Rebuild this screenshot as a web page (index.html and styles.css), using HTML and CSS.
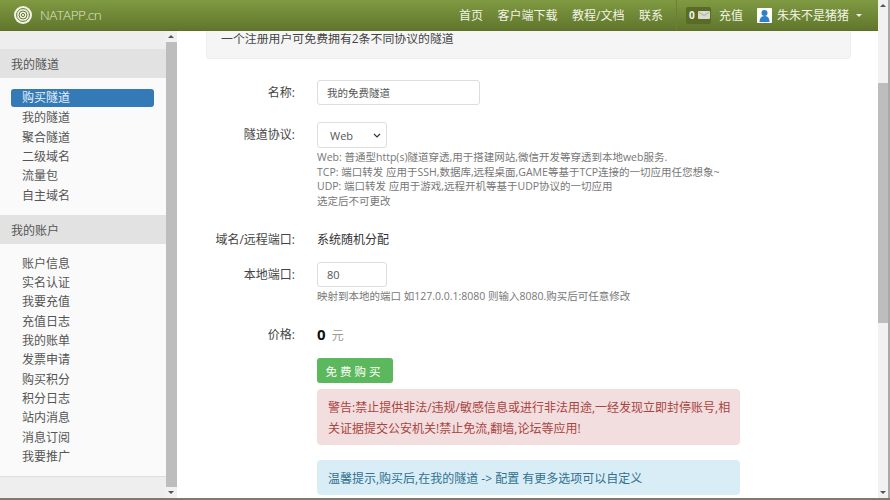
FILE: index.html
```html
<!DOCTYPE html>
<html lang="zh-CN">
<head>
<meta charset="utf-8">
<title>NATAPP</title>
<link rel="stylesheet" href="styles.css">
</head>
<body>
<div class="app">
  <div class="main">
    <header class="nav">
      <a class="brand">
        <svg class="logo" viewBox="0 0 18 18" width="18" height="18"><circle cx="9" cy="9" r="9" fill="#f1f3e6"/><circle cx="9" cy="9" r="6.4" fill="none" stroke="#66792f" stroke-width="1"/><circle cx="9" cy="9" r="4" fill="none" stroke="#66792f" stroke-width="1"/><circle cx="9" cy="9" r="1.6" fill="none" stroke="#66792f" stroke-width="1"/></svg>
        <span class="brand-name">NATAPP.cn</span>
      </a>
      <nav class="links">
        <a>首页</a><a>客户端下载</a><a>教程/文档</a><a>联系</a>
      </nav>
      <div class="account">
        <span class="badge"><b>0</b><svg viewBox="0 0 12 8" width="12" height="8"><rect width="12" height="8" rx="1" fill="#d9dcd0"/><path d="M1 1.5l5 3 5-3" fill="none" stroke="#9a9f8c" stroke-width=".8"/></svg></span>
        <a class="recharge">充值</a>
        <svg class="avatar" viewBox="0 0 15 15" width="15" height="15"><rect width="15" height="15" rx="1" fill="#fff"/><circle cx="7.5" cy="5" r="3" fill="#2f80c4"/><path d="M2.5 14c0-4 1.8-6 5-6s5 2 5 6z" fill="#2f80c4"/></svg>
        <a class="user">朱朱不是猪猪</a>
        <span class="caret"></span>
      </div>
    </header>
    <div class="body">
      <aside class="sidebar">
        <div class="side-top"></div>
        <h4 class="side-head">我的隧道</h4>
        <ul class="side-list">
          <li class="active">购买隧道</li>
          <li>我的隧道</li>
          <li>聚合隧道</li>
          <li>二级域名</li>
          <li>流量包</li>
          <li>自主域名</li>
        </ul>
        <h4 class="side-head">我的账户</h4>
        <ul class="side-list second">
          <li>账户信息</li>
          <li>实名认证</li>
          <li>我要充值</li>
          <li>充值日志</li>
          <li>我的账单</li>
          <li>发票申请</li>
          <li>购买积分</li>
          <li>积分日志</li>
          <li>站内消息</li>
          <li>消息订阅</li>
          <li>我要推广</li>
        </ul>
        <div class="side-bottom"></div>
      </aside>
      <div class="scrollbar side-scroll">
        <span class="arrow up"></span>
        <span class="thumb"></span>
        <span class="arrow down"></span>
      </div>
      <main class="content">
        <div class="well">一个注册用户可免费拥有2条不同协议的隧道</div>
        <form class="form">
          <div class="row row-name">
            <label>名称:</label>
            <div class="field"><input class="control wide" type="text" value="我的免费隧道"></div>
          </div>
          <div class="row row-proto">
            <label>隧道协议:</label>
            <div class="field">
              <div class="control narrow select"><span>Web</span><svg viewBox="0 0 8 5" width="8" height="5"><path d="M1 1l3 3 3-3" fill="none" stroke="#333" stroke-width="1.2"/></svg></div>
              <p class="help">Web: 普通型http(s)隧道穿透,用于搭建网站,微信开发等穿透到本地web服务.<br>TCP: 端口转发 应用于SSH,数据库,远程桌面,GAME等基于TCP连接的一切应用任您想象~<br>UDP: 端口转发 应用于游戏,远程开机等基于UDP协议的一切应用<br>选定后不可更改</p>
            </div>
          </div>
          <div class="row row-domain">
            <label>域名/远程端口:</label>
            <div class="field static">系统随机分配</div>
          </div>
          <div class="row row-port">
            <label>本地端口:</label>
            <div class="field">
              <input class="control narrow" type="text" value="80">
              <p class="help">映射到本地的端口 如127.0.0.1:8080 则输入8080.购买后可任意修改</p>
            </div>
          </div>
          <div class="row row-price">
            <label>价格:</label>
            <div class="field static"><b class="price">0</b> <span class="unit">元</span></div>
          </div>
          <div class="actions">
            <button class="buy" type="button">免 费 购 买</button>
            <div class="alert danger">警告:禁止提供非法/违规/敏感信息或进行非法用途,一经发现立即封停账号,相关证据提交公安机关!禁止免流,翻墙,论坛等应用!</div>
            <div class="alert info">温馨提示,购买后,在我的隧道 -&gt; 配置 有更多选项可以自定义</div>
          </div>
        </form>
      </main>
    </div>
  </div>
  <div class="scrollbar page-scroll">
    <span class="arrow up"></span>
    <span class="thumb"></span>
    <span class="arrow down"></span>
  </div>
</div>
</body>
</html>
```

FILE: styles.css
```css
* { box-sizing: border-box; }
html, body { margin: 0; height: 500px; overflow: hidden; }
body {
  font-family: "Open Sans", "Noto Sans CJK SC", sans-serif;
  font-size: 12px;
  color: #444;
  background: #fff;
  border-bottom: 2px solid #7d7a70;
}
.app { display: flex; height: 498px; border-right: 2px solid #a9a9a9; }
.main { flex: 1; min-width: 0; display: flex; flex-direction: column; }

.nav {
  height: 31px;
  flex: none;
  display: flex;
  align-items: center;
  padding-left: 14px;
  background: linear-gradient(#7f9a42, #61762c);
  color: #f2f4e6;
  border-bottom: 1px solid #5c702a;
}
.brand { display: flex; align-items: center; gap: 8px; }
.brand-name { font-size: 13.5px; font-weight: 300; letter-spacing: -.6px; color: #dfe6c6; font-family: "Open Sans", sans-serif; }
.links { margin-left: auto; display: flex; gap: 14.5px; margin-right: 13px; }
.account { display: flex; align-items: center; height: 30px; padding-left: 9px; border-left: 1px solid #6b8034; margin-right: 16px; }
.badge {
  display: flex; align-items: center; gap: 3px;
  width: 25px; height: 17px; padding-left: 3px;
  background: #5a6b28; border-radius: 2px; font-size: 10px;
}
.recharge { margin: 0 14px 0 8px; }
.user { margin: 0 7px 0 5px; }
.caret { width: 0; height: 0; border: 3px solid transparent; border-top-color: #eee; border-bottom: 0; }

.body { flex: 1; min-height: 0; display: flex; }
.sidebar { width: 166px; flex: none; display: flex; flex-direction: column; background: #fafafa; }
.side-top { height: 18px; background: #eee; }
.side-head { margin: 0; height: 29px; padding-left: 11px; line-height: 31px; font-size: 12px; font-weight: 400; background: #e2e2e2; color: #555; }
.side-list { list-style: none; margin: 0 12px 0 11px; padding: 11px 0 10px; line-height: 19.3px; color: #555; }
.side-list.second { padding-top: 10px; }
.side-list li { padding-left: 11px; }
.side-list .active { background: #337ab7; color: #e8f0f8; border-radius: 3px; height: 18px; line-height: 18px; margin-bottom: 1.4px; }
.side-bottom { flex: 1; background: #eee; border-top: 1px solid #ddd; }

.scrollbar { flex: none; display: flex; flex-direction: column; background: #f1f1f1; }
.side-scroll { width: 11px; }
.page-scroll { width: 10px; }
.arrow { flex: none; height: 11px; position: relative; }
.arrow::after { content: ""; position: absolute; left: 2px; top: 4px; border: 3px solid transparent; }
.arrow.up::after { border-top: 0; border-bottom-color: #555; }
.arrow.down::after { border-bottom: 0; border-top-color: #555; }
.thumb { display: block; background: #bdbdbd; }
.side-scroll .thumb { flex: 1; }
.page-scroll .thumb { height: 240px; margin-top: 72px; margin-bottom: auto; }

.content { flex: 1; min-width: 0; padding: 0 27px 0 29px; }
.well {
  height: 28px; padding-left: 14px; line-height: 14px; font-size: 11.9px;
  background: #f5f5f5; border: 1px solid #eee; border-top: 0;
  border-radius: 0 0 4px 4px; color: #444;
}
.form { padding-top: 21px; }
.row { display: flex; }
.row label { width: 89px; flex: none; text-align: right; margin-right: 22px; line-height: 25px; color: #444; }
.row-proto { margin-top: 17px; }
.row-proto label { line-height: 26px; }
.row-domain { margin-top: 19px; }
.row-domain, .row-price { height: 22px; }
.row-domain label, .row-price label { line-height: 24px; }
.row-port { margin-top: 12.2px; }
.row-price { margin-top: 19.3px; }
.static { line-height: 22px; color: #333; }
.row-domain .static { line-height: 24px; }
.control {
  display: block; height: 25px; padding: 0 9px;
  border: 1px solid #ddd; border-radius: 3px;
  font-family: inherit; font-size: 10.5px; color: #555; background: #fff;
}
.wide { width: 163px; }
.narrow { width: 70px; font-size: 11px; }
.select { height: 26px; display: flex; align-items: center; justify-content: space-between; padding: 0 3px 0 12px; }
.select svg { margin-right: 2px; }
.help { margin: 2px 0 0; font-size: 10.5px; line-height: 14.7px; color: #777; white-space: nowrap; }
.price { font-size: 15px; color: #111; }
.unit { color: #999; margin-left: 3px; }
.actions { margin: 13px 0 0 111px; }
.buy {
  display: block; width: 76px; height: 25px; padding: 0 4px 0 0;
  border: 0; border-radius: 3px;
  background: #5cb85c; color: #fff; font-family: inherit; font-size: 11.5px;
}
.alert { width: 423px; padding: 8px 8px 6px 11px; border-radius: 4px; line-height: 21px; }
.danger { margin-top: 6px; background: #f2dede; color: #a94442; }
.info { margin-top: 15px; background: #d9edf7; color: #31708f; }
```
